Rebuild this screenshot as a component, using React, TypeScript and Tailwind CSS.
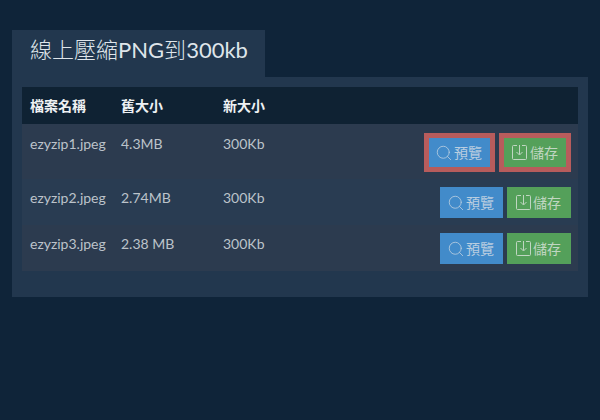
import { Search } from 'lucide-react';

type Row = { name: string; oldSize: string; highlight?: boolean };

const rows: Row[] = [
  { name: 'ezyzip1.jpeg', oldSize: '4.3MB', highlight: true },
  { name: 'ezyzip2.jpeg', oldSize: '2.74MB' },
  { name: 'ezyzip3.jpeg', oldSize: '2.38 MB' },
];

const font = { fontFamily: 'Lato, "Noto Sans CJK TC", sans-serif' };

const DownloadIcon = () => (
  <svg width="15" height="15" viewBox="0 0 15 15" fill="none" stroke="currentColor" strokeWidth="1">
    <path d="M5 .5H1.5a1 1 0 0 0-1 1v12a1 1 0 0 0 1 1h12a1 1 0 0 0 1-1v-12a1 1 0 0 0-1-1H10" />
    <path d="M7.5 0v9.5M4.5 7l3 3 3-3" />
  </svg>
);

const App = () => {
  return (
    <div className="w-[600px] h-[420px] overflow-hidden bg-[#0f2439] pt-[30px] px-3" style={font}>
      <div className="w-[253px] h-[47px] bg-[#22374e] pl-[18px] pt-[5px] text-[22px] leading-[30px] text-[#dfe5ea]">
        <span className="font-light">線上壓縮</span>PNG<span className="font-light">到</span>300kb
      </div>
      <div className="h-[220px] bg-[#22374e] p-2.5">
        <div className="flex h-[37px] items-center bg-[#0f2233] pl-2 text-[14px] font-bold text-[#eef1f3]">
          <span className="w-[91px]">檔案名稱</span>
          <span className="w-[102px]">舊大小</span>
          <span>新大小</span>
        </div>
        {rows.map((row, i) => (
          <div
            key={row.name}
            className={`flex items-start justify-between pl-2 pr-[7px] ${
              row.highlight ? 'h-[55px] pt-[9px]' : 'h-[46px] pt-2'
            } ${i === 1 ? 'bg-[#293c52]' : 'bg-[#2c3b4f]'}`}
          >
            <div className="flex pt-[2px] text-[14px] leading-[18px] text-[#bcc3ca]">
              <span className="w-[91px]">{row.name}</span>
              <span className="w-[102px]">{row.oldSize}</span>
              <span>300Kb</span>
            </div>
            <div className="flex gap-1">
              <button
                className={`flex items-center gap-px bg-[#428bca] text-[14px] text-[#b9cde0] ${
                  row.highlight
                    ? 'w-[71px] h-[39px] pl-1.5 border-[5px] border-[#b85c5c]'
                    : 'w-[63px] h-[31px] pl-[7px]'
                }`}
              >
                <Search size={18} strokeWidth={1.1} />
                預覽
              </button>
              <button
                className={`flex items-center bg-[#54a05a] text-[14px] text-[#c0d6c2] ${
                  row.highlight
                    ? 'w-[72px] h-[39px] pl-2 gap-[3px] border-[5px] border-[#b85c5c]'
                    : 'w-[64px] h-[31px] pl-[9px] gap-0.5'
                }`}
              >
                <DownloadIcon />
                儲存
              </button>
            </div>
          </div>
        ))}
      </div>
    </div>
  );
};

export default App;
